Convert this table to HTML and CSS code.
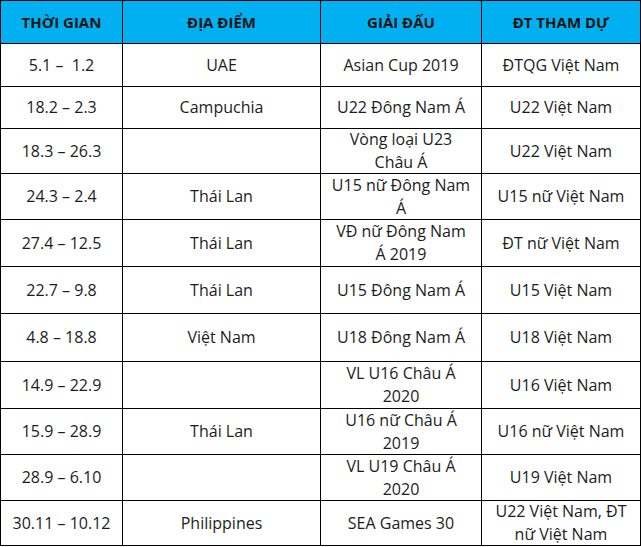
FILE: index.html
```html
<!DOCTYPE html>
<html lang="vi">
<head>
<meta charset="utf-8">
<title>Lịch thi đấu</title>
<link rel="stylesheet" href="styles.css">
</head>
<body>
<div class="sheet" role="table">
  <div class="cell head">THỜI GIAN</div>
  <div class="cell head">ĐỊA ĐIỂM</div>
  <div class="cell head">GIẢI ĐẤU</div>
  <div class="cell head">ĐT THAM DỰ</div>

  <div class="cell">5.1 –&nbsp; 1.2</div>
  <div class="cell">UAE</div>
  <div class="cell">Asian Cup 2019</div>
  <div class="cell">ĐTQG Việt Nam</div>

  <div class="cell">18.2 – 2.3</div>
  <div class="cell">Campuchia</div>
  <div class="cell">U22 Đông Nam Á</div>
  <div class="cell">U22 Việt Nam</div>

  <div class="cell">18.3 – 26.3</div>
  <div class="cell"></div>
  <div class="cell">Vòng loại U23<br>Châu Á</div>
  <div class="cell">U22 Việt Nam</div>

  <div class="cell">24.3 – 2.4</div>
  <div class="cell">Thái Lan</div>
  <div class="cell">U15 nữ Đông Nam<br>Á</div>
  <div class="cell">U15 nữ Việt Nam</div>

  <div class="cell">27.4 – 12.5</div>
  <div class="cell">Thái Lan</div>
  <div class="cell">VĐ nữ Đông Nam<br>Á 2019</div>
  <div class="cell">ĐT nữ Việt Nam</div>

  <div class="cell">22.7 – 9.8</div>
  <div class="cell">Thái Lan</div>
  <div class="cell">U15 Đông Nam Á</div>
  <div class="cell">U15 Việt Nam</div>

  <div class="cell">4.8 – 18.8</div>
  <div class="cell">Việt Nam</div>
  <div class="cell">U18 Đông Nam Á</div>
  <div class="cell">U18 Việt Nam</div>

  <div class="cell">14.9 – 22.9</div>
  <div class="cell"></div>
  <div class="cell">VL U16 Châu Á<br>2020</div>
  <div class="cell">U16 Việt Nam</div>

  <div class="cell">15.9 – 28.9</div>
  <div class="cell">Thái Lan</div>
  <div class="cell">U16 nữ Châu Á<br>2019</div>
  <div class="cell">U16 nữ Việt Nam</div>

  <div class="cell">28.9 – 6.10</div>
  <div class="cell"></div>
  <div class="cell">VL U19 Châu Á<br>2020</div>
  <div class="cell">U19 Việt Nam</div>

  <div class="cell">30.11 – 10.12</div>
  <div class="cell">Philippines</div>
  <div class="cell">SEA Games 30</div>
  <div class="cell">U22 Việt Nam, ĐT<br>nữ Việt Nam</div>
</div>
</body>
</html>
```
FILE: styles.css
```css
html, body {
  margin: 0;
  padding: 0;
  background: #ffffff;
}

.sheet {
  display: grid;
  width: 641px;
  box-sizing: border-box;
  grid-template-columns: 122px 198px 161px 159px;
  grid-template-rows: 43px 43px 42px 45px 46px 47px 47px 48px 47px 46px 46px 45px;
  border-top: 1px solid #000;
  border-left: 1px solid #000;
  font-family: "Open Sans", "Noto Sans", sans-serif;
  font-size: 16px;
  color: #1c1c1c;
}

.cell {
  display: flex;
  align-items: center;
  justify-content: center;
  text-align: center;
  border-right: 1px solid #000;
  border-bottom: 1px solid #000;
  line-height: 23px;
  padding: 0 4px;
  white-space: nowrap;
  overflow: visible;
}

.head {
  background: #00b0f0;
  font-weight: 700;
  font-size: 15px;
  color: #141414;
}
```
